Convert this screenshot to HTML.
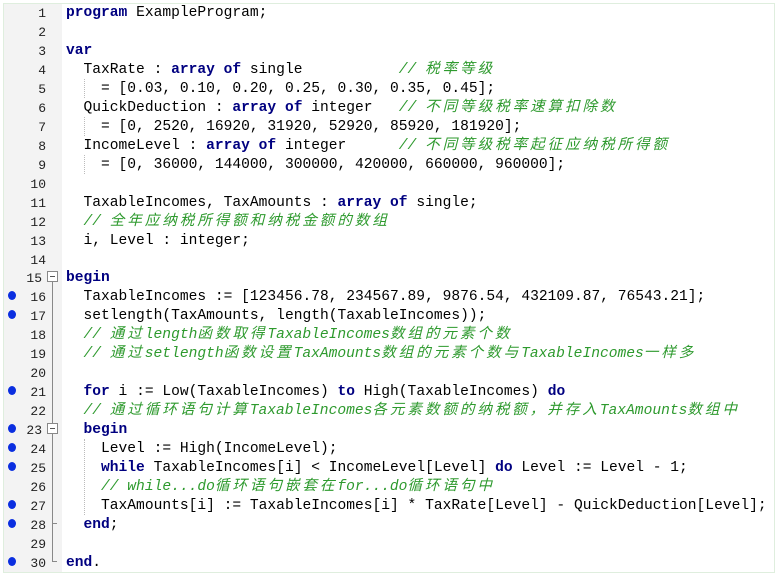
<!DOCTYPE html>
<html><head><meta charset="utf-8">
<style>
html,body{margin:0;padding:0;background:#fff;}
#w{position:relative;width:780px;height:576px;overflow:hidden;background:#fff;}
#frame{position:absolute;left:3px;top:3px;width:772px;height:570px;border:1px solid #dfeede;box-sizing:border-box;}
#gut{position:absolute;left:4px;top:4px;width:58px;height:568px;background:#f3f3f3;}
.l{position:absolute;left:66px;height:19px;line-height:19px;font-family:"Liberation Mono",monospace;font-size:14.6px;color:#000;white-space:pre;}
.n{position:absolute;left:14px;width:32px;text-align:right;height:19px;line-height:19px;font-family:"Liberation Mono",monospace;font-size:13px;color:#222;}
.k{color:#000080;font-weight:bold;}
.c{color:#2e9a2e;font-style:italic;}
.z{font-family:"Noto Sans CJK SC",sans-serif;font-style:italic;letter-spacing:2.9px;font-size:14.6px;line-height:0;vertical-align:0;}
.d{position:absolute;left:8px;width:8px;height:9px;border-radius:50%;background:#0a2ee0;}
.box{position:absolute;left:47px;width:11px;height:11px;border:1px solid #888;background:#fff;box-sizing:border-box;}
.box:after{content:"";position:absolute;left:2px;top:4px;width:5px;height:1px;background:#555;}
.vl{position:absolute;left:52px;width:1px;background:#888;}
.tk{position:absolute;left:52px;width:5px;height:1px;background:#888;}
.g{position:absolute;border-left:1px dotted #bbb;width:0;}
</style></head><body><div id="w">
<div id="gut"></div>
<div id="frame"></div>

<div class="vl" style="top:282px;height:279px"></div>
<div class="tk" style="top:523px"></div>
<div class="tk" style="top:561px"></div>
<div class="box" style="top:271px"></div>
<div class="box" style="top:423px"></div>

<div class="g" style="left:84px;top:79px;height:19px"></div>
<div class="g" style="left:84px;top:117px;height:19px"></div>
<div class="g" style="left:84px;top:155px;height:19px"></div>
<div class="g" style="left:84px;top:439px;height:76px"></div>

<div class="d" style="top:291px"></div>
<div class="d" style="top:310px"></div>
<div class="d" style="top:386px"></div>
<div class="d" style="top:424px"></div>
<div class="d" style="top:443px"></div>
<div class="d" style="top:462px"></div>
<div class="d" style="top:500px"></div>
<div class="d" style="top:519px"></div>
<div class="d" style="top:557px"></div>

<div class="n" style="top:4px">1</div><div class="l" style="top:4px"><span class="k">program</span> ExampleProgram;</div>
<div class="n" style="top:23px">2</div>
<div class="n" style="top:42px">3</div><div class="l" style="top:42px"><span class="k">var</span></div>
<div class="n" style="top:61px">4</div><div class="l" style="top:61px">  TaxRate : <span class="k">array of</span> single           <span class="c">// <span class="z">税率等级</span></span></div>
<div class="n" style="top:80px">5</div><div class="l" style="top:80px">    = [0.03, 0.10, 0.20, 0.25, 0.30, 0.35, 0.45];</div>
<div class="n" style="top:99px">6</div><div class="l" style="top:99px">  QuickDeduction : <span class="k">array of</span> integer   <span class="c">// <span class="z">不同等级税率速算扣除数</span></span></div>
<div class="n" style="top:118px">7</div><div class="l" style="top:118px">    = [0, 2520, 16920, 31920, 52920, 85920, 181920];</div>
<div class="n" style="top:137px">8</div><div class="l" style="top:137px">  IncomeLevel : <span class="k">array of</span> integer      <span class="c">// <span class="z">不同等级税率起征应纳税所得额</span></span></div>
<div class="n" style="top:156px">9</div><div class="l" style="top:156px">    = [0, 36000, 144000, 300000, 420000, 660000, 960000];</div>
<div class="n" style="top:175px">10</div>
<div class="n" style="top:194px">11</div><div class="l" style="top:194px">  TaxableIncomes, TaxAmounts : <span class="k">array of</span> single;</div>
<div class="n" style="top:213px">12</div><div class="l" style="top:213px">  <span class="c">// <span class="z">全年应纳税所得额和纳税金额的数组</span></span></div>
<div class="n" style="top:232px">13</div><div class="l" style="top:232px">  i, Level : integer;</div>
<div class="n" style="top:251px">14</div>
<div class="n" style="top:269px;left:10px">15</div><div class="l" style="top:269px"><span class="k">begin</span></div>
<div class="n" style="top:288px">16</div><div class="l" style="top:288px">  TaxableIncomes := [123456.78, 234567.89, 9876.54, 432109.87, 76543.21];</div>
<div class="n" style="top:307px">17</div><div class="l" style="top:307px">  setlength(TaxAmounts, length(TaxableIncomes));</div>
<div class="n" style="top:326px">18</div><div class="l" style="top:326px">  <span class="c">// <span class="z">通过</span>length<span class="z">函数取得</span>TaxableIncomes<span class="z">数组的元素个数</span></span></div>
<div class="n" style="top:345px">19</div><div class="l" style="top:345px">  <span class="c">// <span class="z">通过</span>setlength<span class="z">函数设置</span>TaxAmounts<span class="z">数组的元素个数与</span>TaxableIncomes<span class="z">一样多</span></span></div>
<div class="n" style="top:364px">20</div>
<div class="n" style="top:383px">21</div><div class="l" style="top:383px">  <span class="k">for</span> i := Low(TaxableIncomes) <span class="k">to</span> High(TaxableIncomes) <span class="k">do</span></div>
<div class="n" style="top:402px">22</div><div class="l" style="top:402px">  <span class="c">// <span class="z">通过循环语句计算</span>TaxableIncomes<span class="z">各元素数额的纳税额，并存入</span>TaxAmounts<span class="z">数组中</span></span></div>
<div class="n" style="top:421px;left:10px">23</div><div class="l" style="top:421px">  <span class="k">begin</span></div>
<div class="n" style="top:440px">24</div><div class="l" style="top:440px">    Level := High(IncomeLevel);</div>
<div class="n" style="top:459px">25</div><div class="l" style="top:459px">    <span class="k">while</span> TaxableIncomes[i] &lt; IncomeLevel[Level] <span class="k">do</span> Level := Level - 1;</div>
<div class="n" style="top:478px">26</div><div class="l" style="top:478px">    <span class="c">// while...do<span class="z">循环语句嵌套在</span>for...do<span class="z">循环语句中</span></span></div>
<div class="n" style="top:497px">27</div><div class="l" style="top:497px">    TaxAmounts[i] := TaxableIncomes[i] * TaxRate[Level] - QuickDeduction[Level];</div>
<div class="n" style="top:516px">28</div><div class="l" style="top:516px">  <span class="k">end</span>;</div>
<div class="n" style="top:535px">29</div>
<div class="n" style="top:554px">30</div><div class="l" style="top:554px"><span class="k">end</span>.</div>
</div></body></html>
